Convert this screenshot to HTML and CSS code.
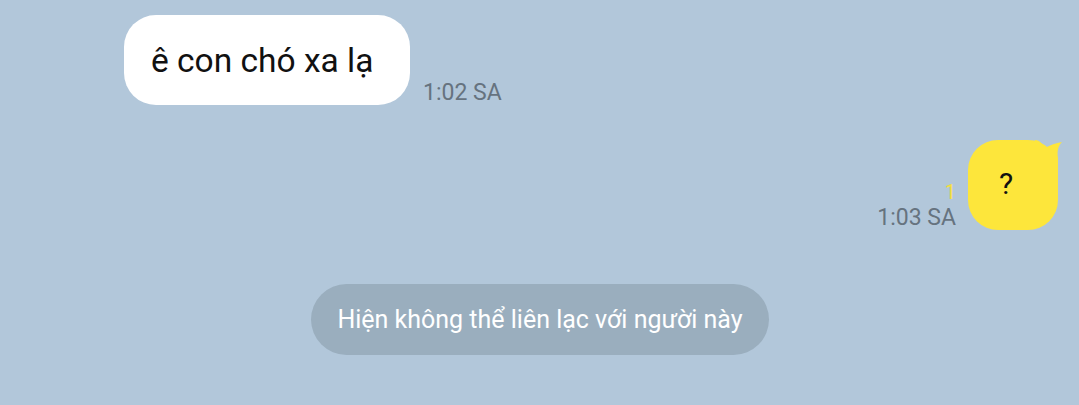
FILE: index.html
```html
<html lang="vi">
  <head>
    <title>Chat</title>
    <meta charset="utf-8">
    <meta name="viewport" content="width=device-width, initial-scale=1.0">
    <link rel="stylesheet" href="styles.css">
  </head>

  <body>
    <div class="chat">
      <div class="row row--in">
        <div class="bubble bubble--in">ê con chó xa lạ</div>
        <div class="meta">
          <span class="meta__time">1:02 SA</span>
        </div>
      </div>

      <div class="row row--out">
        <div class="meta meta--out">
          <span class="meta__unread">1</span>
          <span class="meta__time">1:03 SA</span>
        </div>
        <div class="bubble bubble--out">
          ?
          <svg class="bubble__tail" width="28" height="30" viewBox="0 0 28 30">
            <path d="M0 0 C5 0 8 5 10 8 C15 5 21 3 27 2 C23 6 22 11 23 18 L23 30 L0 30 Z" fill="#fde63b"/>
          </svg>
        </div>
      </div>

      <div class="row row--system">
        <div class="notice">Hiện không thể liên lạc với người này</div>
      </div>
    </div>
  </body>
</html>
```

FILE: styles.css
```css
html, body {
  margin: 0;
  padding: 0;
}

body {
  min-height: 100vh;
  background-color: #b2c7da;
  font-family: Roboto, "Noto Sans", sans-serif;
}

.chat {
  display: flex;
  flex-direction: column;
  padding: 15px 21px 0 124px;
}

.row {
  display: flex;
  align-items: flex-end;
}

.row--out {
  justify-content: flex-end;
  margin-top: 35px;
}

.row--system {
  justify-content: center;
  margin: 54px -21px 0 -124px;
  padding-left: 1px;
}

.bubble {
  box-sizing: border-box;
  height: 90px;
  display: flex;
  align-items: center;
  color: #111;
}

.bubble--in {
  width: 286px;
  padding: 0 0 0 27px;
  background-color: #fff;
  border-radius: 32px;
  font-size: 33.5px;
}

.bubble--out {
  position: relative;
  width: 90px;
  padding: 0 0 4px 31px;
  background-color: #fde63b;
  border-radius: 30px;
  font-size: 30px;
}

.bubble__tail {
  position: absolute;
  top: 0;
  right: -5px;
}

.meta {
  display: flex;
  flex-direction: column;
  margin-left: 13px;
  font-size: 23px;
  color: #66737f;
}

.meta--out {
  align-items: flex-end;
  margin: 0 12px 0 0;
}

.meta__unread {
  color: #f4de3c;
  font-size: 20px;
  line-height: 24px;
  margin-bottom: 2px;
}

.meta__time {
  line-height: 24px;
  margin-bottom: 0;
}

.notice {
  box-sizing: border-box;
  height: 71px;
  padding: 0 26px;
  display: flex;
  align-items: center;
  background-color: #9aaebe;
  border-radius: 36px;
  color: #fff;
  font-size: 25px;
}
```
